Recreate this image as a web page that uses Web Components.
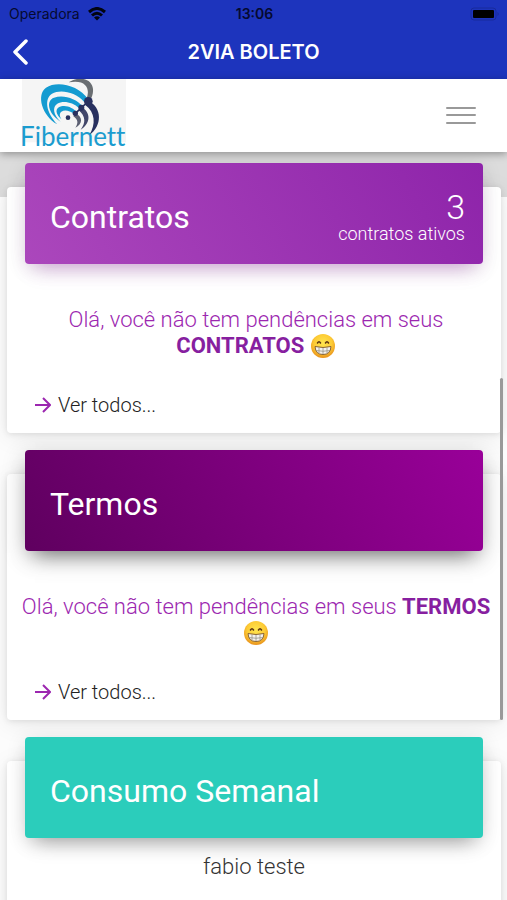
<!DOCTYPE html>
<html lang="pt-BR">
<head>
<meta charset="utf-8">
<meta name="viewport" content="width=device-width, initial-scale=1">
<title>2VIA BOLETO</title>
<style>
    body {
        margin: 0;
        background: #fff;
        font-family: Roboto, "Liberation Sans", sans-serif;
    }
</style>
</head>
<body>
<app-screen>
    <status-bar slot="top" carrier="Operadora" time="13:06"></status-bar>
    <nav-bar slot="top">2VIA BOLETO</nav-bar>
    <brand-bar slot="top"></brand-bar>

    <info-card color="purple">
        <span slot="title">Contratos</span>
        <span slot="count">3</span>
        <span slot="caption">contratos ativos</span>
        <card-message>Olá, você não tem pendências em seus <b>CONTRATOS</b> <grin-emoji></grin-emoji></card-message>
        <more-link slot="footer" href="#contratos">Ver todos...</more-link>
    </info-card>

    <info-card color="plum">
        <span slot="title">Termos</span>
        <card-message>Olá, você não tem pendências em seus <b>TERMOS</b> <grin-emoji></grin-emoji></card-message>
        <more-link slot="footer" href="#termos">Ver todos...</more-link>
    </info-card>

    <info-card color="teal">
        <span slot="title">Consumo Semanal</span>
        <card-message plain>fabio teste</card-message>
    </info-card>
</app-screen>

<script>
class AppScreen extends HTMLElement {
    connectedCallback() {
        this.attachShadow({ mode: 'open' });
        this.shadowRoot.innerHTML = `
            <style>
                :host {
                    display: flex;
                    flex-direction: column;
                    height: 100vh;
                    position: relative;
                    overflow: hidden;
                }

                header {
                    position: relative;
                    z-index: 1;
                    flex: none;
                }

                main {
                    flex: 1;
                    min-height: 0;
                    overflow-y: auto;
                    scrollbar-width: none;
                    box-sizing: border-box;
                    padding: 35px 6px 40px 7px;
                    display: flex;
                    flex-direction: column;
                    gap: 41px;
                    background: linear-gradient(#dcdcdc 45px, #fcfcfc 45px);
                }

                .thumb {
                    position: absolute;
                    z-index: 2;
                    right: 4px;
                    top: 42%;
                    height: 38%;
                    width: 3px;
                    border-radius: 2px;
                    background: #999;
                }
            </style>
            <header><slot name="top"></slot></header>
            <main><slot></slot></main>
            <div class="thumb"></div>
        `;
    }
}

class StatusBar extends HTMLElement {
    connectedCallback() {
        this.attachShadow({ mode: 'open' });
        this.shadowRoot.innerHTML = `
            <style>
                :host {
                    display: grid;
                    grid-template-columns: 1fr auto 1fr;
                    align-items: center;
                    height: 28px;
                    padding: 0 7px 0 9px;
                    background: #1d34bd;
                    color: #050a30;
                    font: 14px/28px Inter, sans-serif;
                }

                .carrier {
                    display: flex;
                    align-items: center;
                    gap: 8px;
                }

                .time {
                    font-weight: 600;
                }

                .battery {
                    justify-self: end;
                }

                svg {
                    display: block;
                }
            </style>
            <div class="carrier">
                <span>${this.getAttribute('carrier')}</span>
                <svg width="18" height="14" viewBox="0 0 18 14" fill="none" stroke="#02040f" stroke-width="3">
                    <path d="M1 5 Q9 -2 17 5"/>
                    <path d="M4 8.500 Q9 4 14 8.500"/>
                    <path d="M6 10.500 Q9 8 12 10.500 L9 13.500Z" fill="#02040f" stroke="none"/>
                </svg>
            </div>
            <span class="time">${this.getAttribute('time')}</span>
            <svg class="battery" width="30" height="14" viewBox="0 0 30 14">
                <rect x="1" y="1" width="25" height="12" rx="3" fill="none" stroke="#182a9c"/>
                <rect x="3" y="3" width="21" height="8" rx="1" fill="#000"/>
                <path d="M27.500 5 Q30 7 27.500 9Z" fill="#182a9c"/>
            </svg>
        `;
    }
}

class NavBar extends HTMLElement {
    connectedCallback() {
        this.attachShadow({ mode: 'open' });
        this.shadowRoot.innerHTML = `
            <style>
                :host {
                    display: grid;
                    grid-template-columns: 40px 1fr 40px;
                    align-items: center;
                    padding-bottom: 3px;
                    background: #1d34bd;
                    color: #fff;
                }

                button {
                    border: 0;
                    padding: 0 0 0 12px;
                    background: none;
                    color: inherit;
                }

                svg {
                    display: block;
                }

                h1 {
                    margin: 0;
                    text-align: center;
                    font: 600 20px/48px Inter, sans-serif;
                }
            </style>
            <button aria-label="Voltar">
                <svg width="17" height="26" viewBox="0 0 17 26" fill="none" stroke="currentColor" stroke-width="3.500" stroke-linecap="round" stroke-linejoin="round">
                    <path d="M14 2 L3 13 L14 24"/>
                </svg>
            </button>
            <h1><slot></slot></h1>
        `;
    }
}

class BrandBar extends HTMLElement {
    connectedCallback() {
        this.attachShadow({ mode: 'open' });
        this.shadowRoot.innerHTML = `
            <style>
                :host {
                    display: flex;
                    justify-content: space-between;
                    align-items: center;
                    height: 73px;
                    padding: 0 30px 0 18px;
                    background: #fff;
                    box-shadow: 0 2px 8px rgba(0, 0, 0, 0.35);
                }

                a {
                    display: block;
                    height: 73px;
                    text-decoration: none;
                }

                svg {
                    display: block;
                }

                text {
                    font: 78px Lato, sans-serif;
                    font-variant-ligatures: none;
                }

                button {
                    border: 0;
                    padding: 0;
                    background: none;
                }
            </style>
            <a href="#inicio" aria-label="Fibernett">
                <svg width="114" height="73" viewBox="54 12 342 219">
                    <rect x="66" y="12" width="312" height="190" fill="#f5f5f5"/>
                    <path d="M206 22 C236 2 276 10 279 42 C280 56 276 66 270 76 L260 70 C270 44 262 12 206 22Z" fill="#6a6e72"/>
                    <path d="M172 148 C126 122 108 60 138 38 C170 16 236 30 264 72 L252 80 C226 50 180 42 156 56 C132 72 138 112 172 148Z" fill="#149bd1"/>
                    <path d="M182 140 C142 114 138 76 162 68 C190 58 228 70 248 94 L238 100 C218 80 188 76 172 86 C156 96 160 120 182 140Z" fill="#149bd1"/>
                    <path d="M188 136 C164 118 164 98 184 94 C202 90 220 100 232 112 L224 118 C208 106 194 104 184 110 C177 116 178 126 188 136Z" fill="#149bd1"/>
                    <path d="M266 78 C306 98 308 152 268 180 C288 148 286 112 256 90Z" fill="#28305f"/>
                    <path d="M244 96 C274 112 272 146 242 164 C258 144 257 124 236 106Z" fill="#42476a"/>
                    <path d="M226 114 C250 126 248 148 226 158 C236 144 234 134 220 124Z" fill="#5b5f72"/>
                    <path d="M264 80 L226 115" stroke="#28305f" stroke-width="5"/>
                    <circle cx="265" cy="79" r="13" fill="#28305f"/>
                    <circle cx="244" cy="98" r="9" fill="#28305f"/>
                    <circle cx="226" cy="115" r="8" fill="#28305f"/>
                    <circle cx="204" cy="128" r="7" fill="#28305f"/>
                    <text x="60" y="213" fill="#1b9ccf">Fibernett</text>
                </svg>
            </a>
            <button aria-label="Menu">
                <svg width="32" height="20" viewBox="0 0 32 20" stroke="#999" stroke-width="2" stroke-linecap="round">
                    <path d="M2 2 H30 M2 9 H30 M2 17 H30"/>
                </svg>
            </button>
        `;
    }
}

class InfoCard extends HTMLElement {
    connectedCallback() {
        this.attachShadow({ mode: 'open' });
        this.shadowRoot.innerHTML = `
            <style>
                :host {
                    display: flex;
                    flex-direction: column;
                    flex: none;
                    box-sizing: border-box;
                    min-height: 246px;
                    border-radius: 4px;
                    background: #fff;
                    box-shadow: 0 1px 6px rgba(0, 0, 0, 0.1), 0 4px 24px rgba(0, 0, 0, 0.08);
                }

                .head {
                    display: flex;
                    justify-content: space-between;
                    align-items: center;
                    box-sizing: border-box;
                    min-height: 101px;
                    margin: -24px 18px 0;
                    padding: 6px 18px 0 25px;
                    border-radius: 4px;
                    color: #fff;
                }

                :host([color="purple"]) .head {
                    background: linear-gradient(60deg, #ab47bc, #8e24aa);
                    box-shadow: 0 12px 20px -10px rgba(156, 39, 176, 0.4), 0 4px 20px rgba(0, 0, 0, 0.12);
                }

                :host([color="plum"]) .head {
                    background: linear-gradient(60deg, #5f005f, #990099);
                    box-shadow: 0 12px 20px -10px rgba(0, 0, 0, 0.5), 0 6px 24px rgba(0, 0, 0, 0.2);
                }

                :host([color="teal"]) .head {
                    background: #2bcdbb;
                    box-shadow: 0 12px 20px -10px rgba(0, 0, 0, 0.35), 0 4px 20px rgba(0, 0, 0, 0.12);
                }

                h2 {
                    margin: 0;
                    font-size: 32px;
                    font-weight: 400;
                    line-height: 40px;
                }

                .side {
                    display: flex;
                    flex-direction: column;
                    align-items: flex-end;
                    font-weight: 300;
                }

                .count {
                    font-size: 34px;
                    line-height: 34px;
                }

                .caption {
                    font-size: 18px;
                    line-height: 20px;
                }
            </style>
            <div class="head">
                <h2><slot name="title"></slot></h2>
                <div class="side">
                    <slot class="count" name="count"></slot>
                    <slot class="caption" name="caption"></slot>
                </div>
            </div>
            <slot></slot>
            <slot name="footer"></slot>
        `;
    }
}

class CardMessage extends HTMLElement {
    connectedCallback() {
        this.attachShadow({ mode: 'open' });
        this.shadowRoot.innerHTML = `
            <style>
                :host {
                    display: block;
                    padding: 43px 6px 32px 10px;
                    text-align: center;
                    color: #9c27b0;
                    font-size: 22px;
                    font-weight: 300;
                    line-height: 26px;
                }

                :host([plain]) {
                    padding: 16px 8px;
                    color: #333;
                }

                ::slotted(b) {
                    color: #871fa0;
                    font-weight: 700;
                }
            </style>
            <slot></slot>
        `;
    }
}

class MoreLink extends HTMLElement {
    connectedCallback() {
        this.attachShadow({ mode: 'open' });
        this.shadowRoot.innerHTML = `
            <style>
                :host {
                    display: block;
                    padding: 0 28px 14px;
                }

                a {
                    display: inline-flex;
                    align-items: center;
                    gap: 7px;
                    color: #222;
                    font-size: 20px;
                    font-weight: 300;
                    line-height: 28px;
                    text-decoration: none;
                }
            </style>
            <a href="${this.getAttribute('href')}">
                <svg width="16" height="16" viewBox="0 0 16 16" fill="none" stroke="#9c27b0" stroke-width="2">
                    <path d="M0 8 H15 M8 1 L15 8 L8 15"/>
                </svg>
                <slot></slot>
            </a>
        `;
    }
}

class GrinEmoji extends HTMLElement {
    connectedCallback() {
        this.attachShadow({ mode: 'open' });
        this.shadowRoot.innerHTML = `
            <style>
                :host {
                    display: inline-block;
                    vertical-align: top;
                }

                svg {
                    display: block;
                }
            </style>
            <svg width="26" height="26" viewBox="0 0 26 26" role="img" aria-label="sorriso">
                <defs>
                    <radialGradient id="face" cx="50%" cy="38%" r="62%">
                        <stop offset="0" stop-color="#ffe64f"/>
                        <stop offset="0.600" stop-color="#fdcb35"/>
                        <stop offset="1" stop-color="#e8921c"/>
                    </radialGradient>
                </defs>
                <circle cx="13" cy="13" r="12" fill="url(#face)"/>
                <path d="M7.500 10 Q9 7.500 10.500 10 M15.500 10 Q17 7.500 18.500 10" fill="none" stroke="#5c3411" stroke-width="1.500" stroke-linecap="round"/>
                <path d="M5 13.500 Q13 15.500 21 13.500 Q20.500 21.500 13 21.500 Q5.500 21.500 5 13.500Z" fill="#f4f2ee" stroke="#8a6434"/>
                <path d="M6 17.500 Q13 19 20 17.500 M9 14.500 V20 M13 15 V21 M17 14.500 V20" fill="none" stroke="#98948a" stroke-width="0.800"/>
            </svg>
        `;
    }
}

customElements.define('app-screen', AppScreen);
customElements.define('status-bar', StatusBar);
customElements.define('nav-bar', NavBar);
customElements.define('brand-bar', BrandBar);
customElements.define('info-card', InfoCard);
customElements.define('card-message', CardMessage);
customElements.define('more-link', MoreLink);
customElements.define('grin-emoji', GrinEmoji);
</script>
</body>
</html>
